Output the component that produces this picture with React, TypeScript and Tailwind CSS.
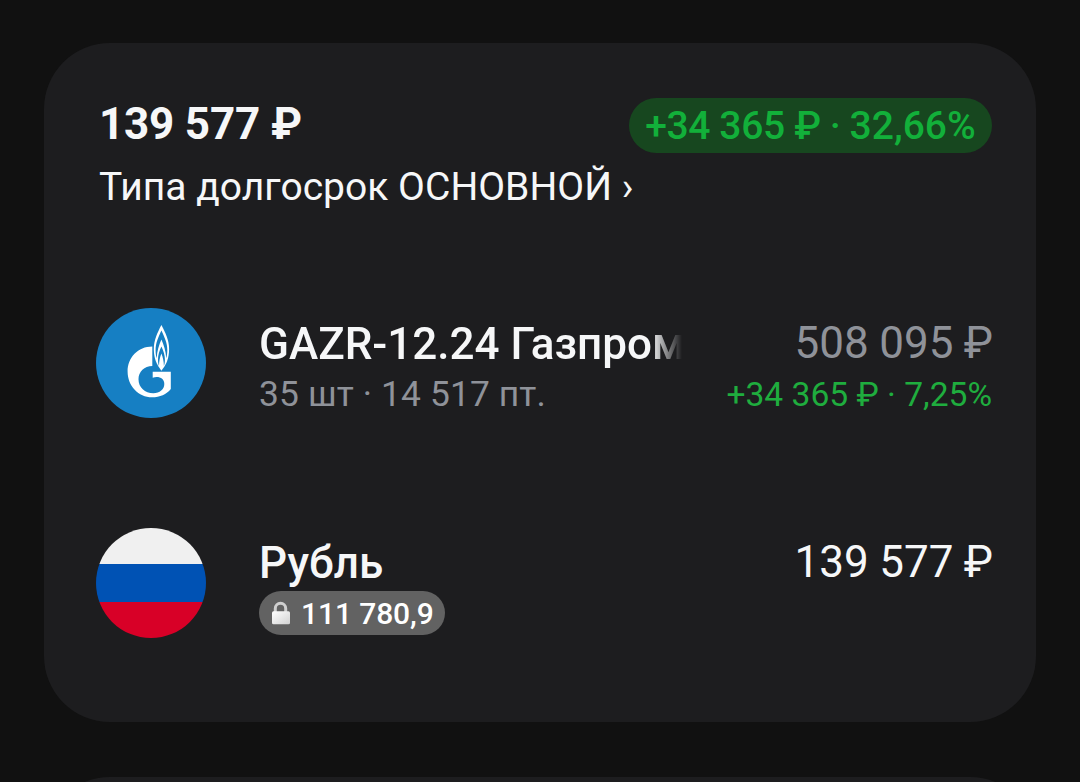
import type { ReactNode } from 'react'

function GazpromIcon() {
  return (
    <svg viewBox="0 0 110 110" className="size-[110px] shrink-0">
      <circle cx="55" cy="55" r="55" fill="#167fc3" />
      <path
        fill="#fff"
        d="M56.3 38.5C42 38.5 31.6 49.5 31.6 63.5C31.6 78 42.5 89.3 56 89.3C64 89.3 70.5 86.3 74.8 81V63.7H56.7V69.7C63 67.8 68.3 70.5 68.3 76C68.3 81.2 63.8 85.3 57.3 85.3C49 85.3 42.5 79.5 42.5 71.3C42.5 63.8 48.4 58 56.3 58Z"
      />
      {/* Flame */}
      <path
        fill="#fff"
        d="M65.4 17C61.5 24.5 57.8 32 57.8 41C57.8 50 60.5 56.5 65.4 62.7C70.5 56.5 73.1 50 73.1 41C73.1 32 69.3 24.5 65.4 17Z"
      />
      <path
        fill="#167fc3"
        d="M65.4 22.5C62.2 29.5 59.6 35 59.6 42C59.6 45.5 60 48 60.7 50.3C61 43 63 37 65.4 31.5C67.8 37 69.9 43 70.2 50.3C70.9 48 71.3 45.5 71.3 42C71.3 35 68.6 29.5 65.4 22.5Z"
      />
      <path
        fill="#167fc3"
        d="M65.4 38.5C63.3 43 62 47 62 51.5C62 54 62.3 56 63 58C63 53 64 49 65.4 45.5C66.8 49 67.9 53 67.9 58C68.6 56 68.9 54 68.9 51.5C68.9 47 67.5 43 65.4 38.5Z"
      />
    </svg>
  )
}

function RussiaIcon() {
  return (
    <div className="flex size-[110px] shrink-0 flex-col overflow-hidden rounded-full">
      <div className="h-9 bg-[#f0f0f0]" />
      <div className="h-[38px] bg-[#0052b4]" />
      <div className="h-9 bg-[#d80027]" />
    </div>
  )
}

function LockIcon() {
  return (
    <svg viewBox="0 0 20 24" className="h-6 w-5">
      <defs>
        <linearGradient id="lock" x1="0" y1="0" x2="1" y2="1">
          <stop offset="0" stopColor="#ffffff" />
          <stop offset="1" stopColor="#d2d2d2" />
        </linearGradient>
      </defs>
      <path d="M4.3 12V7.4a5.2 5.2 0 0 1 10.4 0V12" fill="none" stroke="#cfcfcf" strokeWidth="3" />
      <rect x="1" y="10.3" width="18" height="12.9" rx="1.5" fill="url(#lock)" />
    </svg>
  )
}

function AssetRow({ icon, children }: { icon: ReactNode; children: ReactNode }) {
  return (
    <div className="flex h-[110px] items-start gap-[53px]">
      {icon}
      <div className="flex flex-1 justify-between pt-[9px]">{children}</div>
    </div>
  )
}

export default function App() {
  return (
    <div className="h-[782px] w-[1080px] overflow-hidden bg-[#111111] px-11 pt-[43px] font-['Roboto',sans-serif] whitespace-nowrap text-[#f6f7f8]">
      <div className="h-[679px] rounded-[66px] bg-[#1d1d1f] pt-[55px] pr-[43px] pl-[52px]">
        {/* Account summary */}
        <div className="flex h-[66px] items-start justify-between pr-px pl-[3px]">
          <div className="text-[44px] leading-[52px] font-bold">
            <span className="-tracking-[0.2px]">139 577</span> ₽
          </div>
          <div className="flex h-[55px] w-[363px] items-center justify-center rounded-full bg-[#17471f] text-[39px] leading-[57px] font-medium text-[#12b03a]">
            <div className="pt-px">
              <span className="-tracking-[0.4px]">+34 365</span> ₽<span className="[word-spacing:-1px]"> · 32,66%</span>
            </div>
          </div>
        </div>
        <div className="h-[144px] pl-[3px] text-[39px] leading-[46px] tracking-[0.03px]">Типа долгосрок ОСНОВНОЙ ›</div>

        <div className="flex flex-col gap-[110px]">
          <AssetRow icon={<GazpromIcon />}>
            <div>
              <div className="w-[440px] mask-[linear-gradient(to_right,#000_392px,transparent_423px)] text-[44px] leading-[54px] font-medium">
                GAZR-12.24 Газпром
              </div>
              <div className="text-[35.4px] leading-[46px] tracking-[0.12px] text-[#8f9299]">35 шт · 14 517 пт.</div>
            </div>
            <div className="text-right">
              <div className="text-[44px] leading-[52px] text-[#8f9299] [word-spacing:-0.5px]">508 095 ₽</div>
              <div className="pr-px text-[33.6px] leading-[52px] text-[#1fad3e]">+34 365 ₽ · 7,25%</div>
            </div>
          </AssetRow>

          <AssetRow icon={<RussiaIcon />}>
            <div>
              <div className="h-[54px] text-[44px] leading-[52px] font-medium">Рубль</div>
              <div className="flex h-11 w-[186px] items-center gap-[10px] rounded-full bg-[#626262] pl-3 text-[30px] leading-[44px] font-medium text-white">
                <LockIcon />
                <span className="pt-px -tracking-[0.1px]">111 780,9</span>
              </div>
            </div>
            <div className="text-right text-[44px] leading-[50px] [word-spacing:-0.5px]">139 577 ₽</div>
          </AssetRow>
        </div>
      </div>

      {/* Next card */}
      <div className="mt-[55px] h-[200px] rounded-[66px] bg-[#1d1d1f]" />
    </div>
  )
}
